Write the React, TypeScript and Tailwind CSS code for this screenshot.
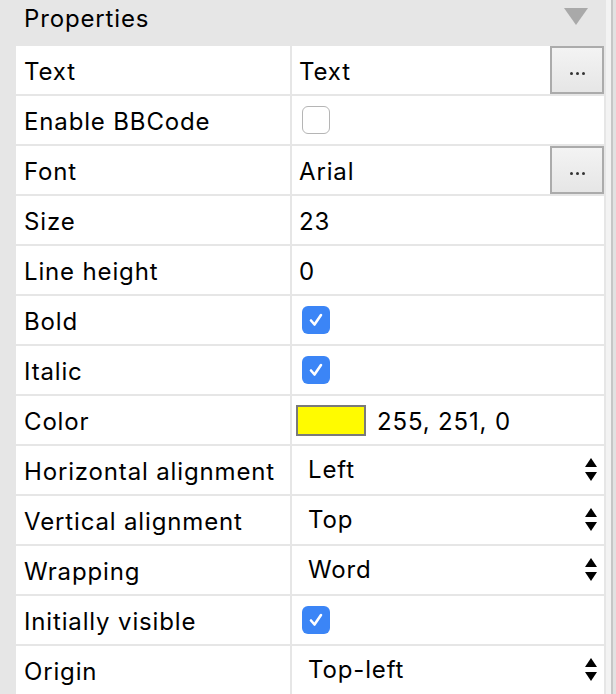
import React from "react";

type Row =
  | { label: string; kind: "text"; value: string; button?: boolean }
  | { label: string; kind: "check"; checked: boolean }
  | { label: string; kind: "color"; value: string }
  | { label: string; kind: "select"; value: string };

const rows: Row[] = [
  { label: "Text", kind: "text", value: "Text", button: true },
  { label: "Enable BBCode", kind: "check", checked: false },
  { label: "Font", kind: "text", value: "Arial", button: true },
  { label: "Size", kind: "text", value: "23" },
  { label: "Line height", kind: "text", value: "0" },
  { label: "Bold", kind: "check", checked: true },
  { label: "Italic", kind: "check", checked: true },
  { label: "Color", kind: "color", value: "255, 251, 0" },
  { label: "Horizontal alignment", kind: "select", value: "Left" },
  { label: "Vertical alignment", kind: "select", value: "Top" },
  { label: "Wrapping", kind: "select", value: "Word" },
  { label: "Initially visible", kind: "check", checked: true },
  { label: "Origin", kind: "select", value: "Top-left" },
];

function DotsButton() {
  return (
    <div className="ml-auto h-[48px] w-[54px] border-2 border-[#ababab] bg-gradient-to-b from-[#f3f3f3] to-[#e6e6e6] flex items-center justify-center">
      <div className="flex gap-[3px] mt-[6px]">
        <span className="block w-[3px] h-[3px] rounded-full bg-[#333]" />
        <span className="block w-[3px] h-[3px] rounded-full bg-[#333]" />
        <span className="block w-[3px] h-[3px] rounded-full bg-[#333]" />
      </div>
    </div>
  );
}

function Checkbox({ checked }: { checked: boolean }) {
  if (!checked)
    return (
      <div className="ml-[10px] w-[28px] h-[28px] rounded-[6px] border border-[#b5b5b5] bg-white" />
    );
  return (
    <div className="ml-[10px] w-[28px] h-[28px] rounded-[6px] bg-[#3b85f6] flex items-center justify-center">
      <svg width="18" height="18" viewBox="0 0 18 18">
        <path d="M4 9.5 L7.5 13.5 L14 4" fill="none" stroke="white" strokeWidth="2.6" strokeLinecap="round" strokeLinejoin="round" />
      </svg>
    </div>
  );
}

function Stepper() {
  return (
    <svg className="ml-auto mr-[7px]" width="12" height="24" viewBox="0 0 12 24">
      <path d="M6 0 L12 9 L0 9 Z" fill="#000" />
      <path d="M0 14 L12 14 L6 23 Z" fill="#000" />
    </svg>
  );
}

function ValueCell({ row }: { row: Row }) {
  switch (row.kind) {
    case "text":
      return (
        <div className="flex items-center h-full">
          <span className="pl-[7px] pt-[3px]">{row.value}</span>
          {row.button ? <DotsButton /> : null}
        </div>
      );
    case "check":
      return (
        <div className="flex items-center h-full">
          <Checkbox checked={row.checked} />
        </div>
      );
    case "color":
      return (
        <div className="flex items-center h-full">
          <div className="ml-[4px] w-[70px] h-[31px] border-2 border-[#7a7a7a] bg-[#fffb00]" />
          <span className="ml-[11px] pt-[3px]">{row.value}</span>
        </div>
      );
    case "select":
      return (
        <div className="flex items-center h-full">
          <span className="pl-[16px]">{row.value}</span>
          <Stepper />
        </div>
      );
  }
}

export default function App() {
  return (
    <div
      className="w-[616px] h-[694px] overflow-hidden flex text-black text-[24px] leading-[24px] tracking-[0.85px]"
      style={{ fontFamily: "Inter, 'Liberation Sans', sans-serif" }}
    >
      <div className="w-[606px] h-full bg-[#e6e6e6] flex flex-col">
        <div className="h-[46px] shrink-0 flex items-start justify-between">
          <span className="pl-[24px] pt-[7px]">Properties</span>
          <svg className="mt-[8px] mr-[18px]" width="24" height="17" viewBox="0 0 24 17">
            <path d="M0 0 L24 0 L12 17 Z" fill="#a9a9a9" />
          </svg>
        </div>
        <div className="ml-[16px] w-[588px] flex flex-col gap-[2px]">
          {rows.map((row) => (
            <div key={row.label} className="grid grid-cols-[274px_312px] gap-[2px] h-[48px] shrink-0">
              <div className="bg-white flex items-center pl-[8px]">
                <span className="pt-[3px]">{row.label}</span>
              </div>
              <div className="bg-white h-full">
                <ValueCell row={row} />
              </div>
            </div>
          ))}
        </div>
      </div>
      <div className="w-[10px] h-full flex">
        <div className="w-[5px] bg-[#f3f3f3]" />
        <div className="w-[2px] bg-[#c6c6c6]" />
        <div className="w-[3px] bg-[#e2e2e2]" />
      </div>
    </div>
  );
}
